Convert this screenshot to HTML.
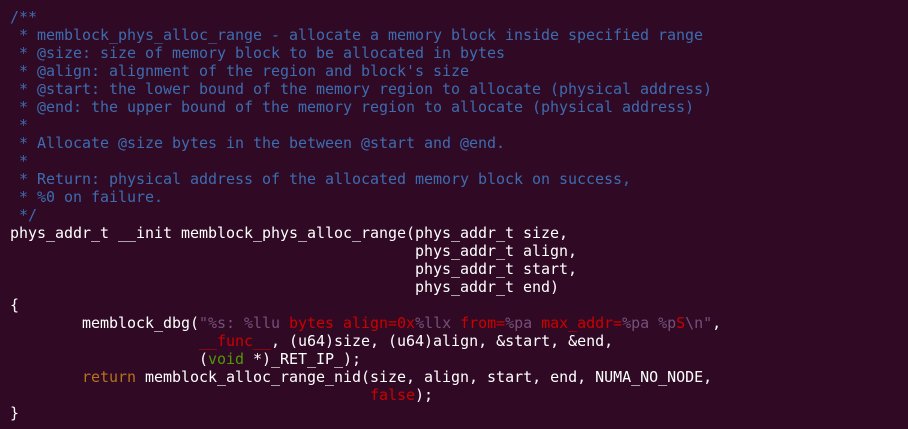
<!DOCTYPE html>
<html><head><style>
html,body{margin:0;padding:0;background:#300a24;width:908px;height:429px;overflow:hidden}
pre{margin:0;position:absolute;left:10px;top:8px;font-family:"DejaVu Sans Mono","Liberation Mono",monospace;font-size:15px;line-height:18px;color:#ffffff;letter-spacing:-0.03px}
.c{color:#3d6cb0}.p{color:#75507b}.r{color:#cc0000}.g{color:#4e9a06}.y{color:#c4a000}.o{color:#b5731d}
</style></head><body><pre><span class="c">/**
 * memblock_phys_alloc_range - allocate a memory block inside specified range
 * @size: size of memory block to be allocated in bytes
 * @align: alignment of the region and block's size
 * @start: the lower bound of the memory region to allocate (physical address)
 * @end: the upper bound of the memory region to allocate (physical address)
 *
 * Allocate @size bytes in the between @start and @end.
 *
 * Return: physical address of the allocated memory block on success,
 * %0 on failure.
 */</span>
phys_addr_t __init memblock_phys_alloc_range(phys_addr_t size,
                                             phys_addr_t align,
                                             phys_addr_t start,
                                             phys_addr_t end)
{
        memblock_dbg(<span class="p">"%s: %llu</span><span class="r"> bytes align=0x</span><span class="p">%llx</span><span class="r"> from=</span><span class="p">%pa</span><span class="r"> max_addr=</span><span class="p">%pa %p</span><span class="r">S</span><span class="p">\n"</span>,
                     <span class="r">__func__</span>, (u64)size, (u64)align, &amp;start, &amp;end,
                     (<span class="g">void</span> *)_RET_IP_);
        <span class="o">return</span> memblock_alloc_range_nid(size, align, start, end, NUMA_NO_NODE,
                                        <span class="r">false</span>);
}</pre></body></html>
